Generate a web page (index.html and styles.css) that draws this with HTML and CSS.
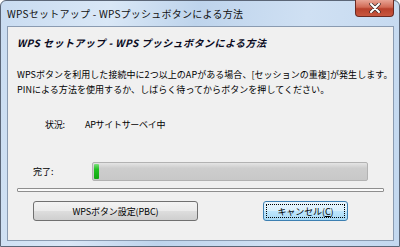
FILE: index.html
```html
<!DOCTYPE html>
<html lang="ja">
<head>
<meta charset="utf-8">
<link rel="stylesheet" href="styles.css">
</head>
<body>
<div class="window">
  <div class="titlebar">
    <span class="title">WPSセットアップ - WPSプッシュボタンによる方法</span>
    <span class="close"><svg width="14" height="10" viewBox="0 0 14 10"><path d="M3 1 L11 9 M11 1 L3 9" stroke="#3a2a2a" stroke-width="3.4" stroke-linecap="round"/><path d="M3 1 L11 9 M11 1 L3 9" stroke="#fff" stroke-width="2" stroke-linecap="round"/></svg></span>
  </div>
  <div class="client">
    <div class="heading">WPS セットアップ - WPS プッシュボタンによる方法</div>
    <p class="desc">WPSボタンを利用した接続中に2つ以上のAPがある場合、[セッションの重複]が発生します。<br>PINによる方法を使用するか、しばらく待ってからボタンを押してください。</p>
    <div class="status"><span class="label">状況:</span><span>APサイトサーベイ中</span></div>
    <div class="progress-row"><span class="plabel">完了:</span><div class="track"><div class="fill" style="width:5px"></div></div></div>
    <div class="sep"></div>
    <div class="buttons">
      <button class="btn">WPSボタン設定(PBC)</button>
      <button class="btn default"><span class="focus">キャンセル(<u>C</u>)</span></button>
    </div>
  </div>
</div>
</body>
</html>
```
FILE: styles.css
```css
* { box-sizing: border-box; }
html, body { margin: 0; padding: 0; background: #fff; }
body { font-family: "Noto Sans CJK JP", "Noto Sans", sans-serif; color: #000; }
.window {
  width: 400px; height: 247px;
  background: linear-gradient(100deg, #c9dcf1 0%, #d9e7f6 25%, #bed4ec 45%, #cfe0f3 70%, #c3d8ef 100%);
  border: 1px solid #5b6677;
  border-radius: 6px 6px 0 0;
  display: flex; flex-direction: column;
  padding: 0 5px 5px 6px;
}
.titlebar {
  height: 25px; display: flex; align-items: flex-start;
}
.title { font-size: 10px; line-height: 10px; margin-top: 8px; color: #111; letter-spacing: 0.25px; white-space: nowrap; }
.close {
  margin-left: auto; margin-right: 0px; margin-top: -1px;
  width: 39px; height: 17px;
  border: 1px solid #6b2a22; border-top: none;
  border-radius: 0 0 4px 4px;
  background: linear-gradient(#e8a495 0%, #d16a55 45%, #b8412c 55%, #c8573f 100%);
  display: flex; align-items: center; justify-content: center;
}
.client {
  flex: 1;
  background: #f0f0f0;
  border: 1px solid #8a9bb1;
  padding: 0 9px 0 9px;
}
.heading {
  font-weight: bold; font-style: italic; font-size: 10px; line-height: 12px;
  margin-top: 10px; color: #0a0a1e; letter-spacing: 0.45px; white-space: nowrap;
}
.desc {
  margin: 18px 0 0 0; font-size: 9px; line-height: 15px; letter-spacing: 0.05px; white-space: nowrap;
}
.status { display: flex; font-size: 9px; line-height: 12px; margin-top: 22px; padding-left: 28px; letter-spacing: -0.3px; }
.status .label { width: 40px; }
.progress-row { display: flex; align-items: center; margin-top: 31px; padding-left: 16px; }
.plabel { font-size: 9px; width: 59px; }
.track {
  width: 276px; height: 19px;
  border: 1px solid #b2b2b2; border-radius: 2px;
  background: linear-gradient(#e4e4e4 0%, #cdcdcd 30%, #c8c8c8 100%);
  padding: 1px;
}
.fill { height: 100%; background: linear-gradient(#7ee07e 0%, #22c022 35%, #10a810 100%); border-radius: 1px; }
.sep {
  height: 4px; margin-top: 7px;
  border: 1px solid #8e8e8e; border-radius: 1px;
  background: #fafafa;
}
.buttons { display: flex; margin-top: 9px; padding-left: 16px; }
.btn {
  font-family: inherit; font-size: 9px; letter-spacing: -0.1px;
  height: 20px; padding: 0;
  border: 1px solid #707070; border-radius: 3px;
  background: linear-gradient(#f3f3f3 0%, #ebebeb 48%, #dddddd 52%, #cfcfcf 100%);
  color: #000;
  width: 165px;
}
.btn.default {
  width: 85px; margin-left: 65px;
  border-color: #3c7fb1;
  background: linear-gradient(#eaf6fd 0%, #d9f0fc 48%, #bee6fd 52%, #a7d9f5 100%);
  padding: 2px;
}
.focus {
  display: flex; align-items: center; justify-content: center;
  height: 100%; border: 1px dotted #000;
}
```
